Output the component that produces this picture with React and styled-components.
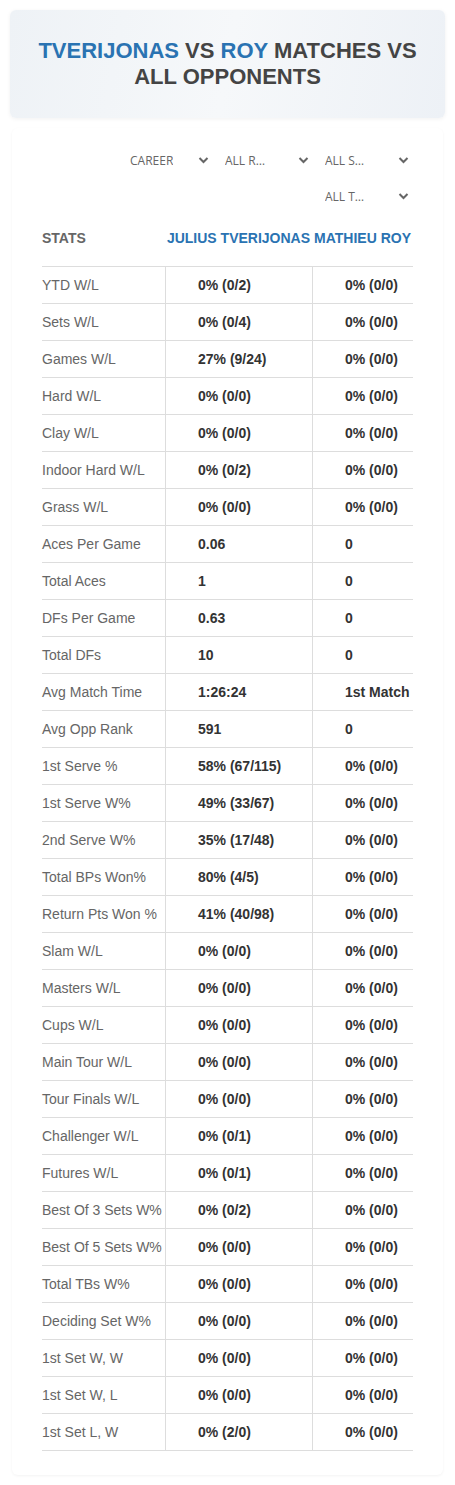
import React from "react";
import styled, { createGlobalStyle } from "styled-components";

const GlobalStyle = createGlobalStyle`
  body {
    margin: 0;
    background: #ffffff;
    font-family: "Liberation Sans", Arial, sans-serif;
  }
`;

const rows = [
  ["YTD W/L", "0% (0/2)", "0% (0/0)"],
  ["Sets W/L", "0% (0/4)", "0% (0/0)"],
  ["Games W/L", "27% (9/24)", "0% (0/0)"],
  ["Hard W/L", "0% (0/0)", "0% (0/0)"],
  ["Clay W/L", "0% (0/0)", "0% (0/0)"],
  ["Indoor Hard W/L", "0% (0/2)", "0% (0/0)"],
  ["Grass W/L", "0% (0/0)", "0% (0/0)"],
  ["Aces Per Game", "0.06", "0"],
  ["Total Aces", "1", "0"],
  ["DFs Per Game", "0.63", "0"],
  ["Total DFs", "10", "0"],
  ["Avg Match Time", "1:26:24", "1st Match"],
  ["Avg Opp Rank", "591", "0"],
  ["1st Serve %", "58% (67/115)", "0% (0/0)"],
  ["1st Serve W%", "49% (33/67)", "0% (0/0)"],
  ["2nd Serve W%", "35% (17/48)", "0% (0/0)"],
  ["Total BPs Won%", "80% (4/5)", "0% (0/0)"],
  ["Return Pts Won %", "41% (40/98)", "0% (0/0)"],
  ["Slam W/L", "0% (0/0)", "0% (0/0)"],
  ["Masters W/L", "0% (0/0)", "0% (0/0)"],
  ["Cups W/L", "0% (0/0)", "0% (0/0)"],
  ["Main Tour W/L", "0% (0/0)", "0% (0/0)"],
  ["Tour Finals W/L", "0% (0/0)", "0% (0/0)"],
  ["Challenger W/L", "0% (0/1)", "0% (0/0)"],
  ["Futures W/L", "0% (0/1)", "0% (0/0)"],
  ["Best Of 3 Sets W%", "0% (0/2)", "0% (0/0)"],
  ["Best Of 5 Sets W%", "0% (0/0)", "0% (0/0)"],
  ["Total TBs W%", "0% (0/0)", "0% (0/0)"],
  ["Deciding Set W%", "0% (0/0)", "0% (0/0)"],
  ["1st Set W, W", "0% (0/0)", "0% (0/0)"],
  ["1st Set W, L", "0% (0/0)", "0% (0/0)"],
  ["1st Set L, W", "0% (2/0)", "0% (0/0)"],
];

const filters = ["CAREER", "ALL ROUNDS", "ALL SURFACES", "ALL TOURNAMENTS"];

function Chevron() {
  return (
    <svg width="11" height="8" viewBox="0 0 11 8">
      <path d="M1.5 2 L5.5 6 L9.5 2" fill="none" stroke="#666" strokeWidth="2" />
    </svg>
  );
}

export default function App() {
  return (
    <Page>
      <GlobalStyle />
      <Header>
        <Title>
          <Blue>Tverijonas</Blue> vs <Blue>Roy</Blue> matches vs all opponents
        </Title>
      </Header>
      <Card>
        <Filters>
          {filters.map((label, i) => (
            <Select key={label} $indent={i === 0}>
              <SelectText>{label}</SelectText>
              <Chevron />
            </Select>
          ))}
        </Filters>
        <Table>
          <HeadRow>
            <HeadCell>Stats</HeadCell>
            <HeadCell $player>Julius Tverijonas</HeadCell>
            <HeadCell $player>Mathieu Roy</HeadCell>
          </HeadRow>
          {rows.map(([label, a, b]) => (
            <Row key={label}>
              <Label>{label}</Label>
              <Value>{a}</Value>
              <Value>{b}</Value>
            </Row>
          ))}
        </Table>
      </Card>
    </Page>
  );
}

const Page = styled.div`
  padding: 10px;
`;

const Header = styled.div`
  height: 108px;
  border-radius: 6px;
  background: linear-gradient(100deg, #eef2f6 0%, #f6f8fa 50%, #edf1f6 100%);
  box-shadow: 0 1px 4px rgba(0, 0, 0, 0.06);
  display: flex;
  align-items: center;
  justify-content: center;
  padding: 0 20px;
`;

const Title = styled.h1`
  margin: 0;
  text-align: center;
  text-transform: uppercase;
  font-size: 22px;
  line-height: 26px;
  font-weight: 700;
  color: #444;
`;

const Blue = styled.span`
  color: #2a73b2;
`;

const Card = styled.div`
  margin: 10px 2px 0;
  padding: 16px 30px 24px;
  border-radius: 6px;
  box-shadow: 0 1px 3px rgba(0, 0, 0, 0.05);
`;

const Filters = styled.div`
  display: flex;
  flex-wrap: wrap;
  justify-content: flex-end;
  row-gap: 4px;
  margin-right: -2px;
  margin-left: 73px;
`;

const Select = styled.div`
  width: 100px;
  height: 32px;
  display: flex;
  align-items: center;
  justify-content: space-between;
  padding: 0 6px 0 ${(p) => (p.$indent ? "15px" : "10px")};
  box-sizing: border-box;
`;

const SelectText = styled.span`
  max-width: 46px;
  overflow: hidden;
  white-space: nowrap;
  text-overflow: ellipsis;
  font-family: "Open Sans", sans-serif;
  font-size: 12px;
  color: #666;
`;

const Table = styled.div`
  margin-top: 2px;
`;

const HeadRow = styled.div`
  display: grid;
  grid-template-columns: 123px 147px 101px;
  height: 52px;
  box-sizing: border-box;
  padding-bottom: 4px;
  align-items: center;
`;

const HeadCell = styled.div`
  font-size: 14px;
  font-weight: 700;
  text-transform: uppercase;
  white-space: nowrap;
  color: ${(p) => (p.$player ? "#2a73b2" : "#666")};
  text-align: ${(p) => (p.$player ? "center" : "left")};
`;

const Row = styled.div`
  display: grid;
  grid-template-columns: 123px 147px 101px;
  height: 37px;
  border-top: 1px solid #dddddd;
  box-sizing: border-box;
  &:last-child {
    border-bottom: 1px solid #dddddd;
    height: 38px;
  }
`;

const Label = styled.div`
  display: flex;
  align-items: center;
  font-size: 14px;
  color: #666;
  white-space: nowrap;
`;

const Value = styled.div`
  display: flex;
  align-items: center;
  padding-left: 32px;
  font-size: 14px;
  font-weight: 700;
  color: #333;
  white-space: nowrap;
  border-left: 1px solid #dddddd;
`;
